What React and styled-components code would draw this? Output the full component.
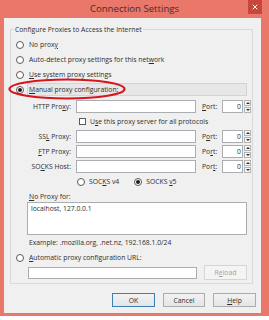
import styled, { createGlobalStyle } from "styled-components";
import { X } from "lucide-react";

const Global = createGlobalStyle`
  html, body {
    margin: 0;
    padding: 0;
    background: #ffffff;
  }
  body {
    font-family: "Open Sans", "Noto Sans", sans-serif;
    font-size: 6.8px;
    color: #2e2e2e;
  }
`;

const Frame = styled.div`
  position: relative;
  width: 269px;
  height: 316px;
  box-sizing: border-box;
  padding: 0 8px 3px 4px;
  background: #e9786b;
  display: flex;
  flex-direction: column;
`;

const TitleBar = styled.div`
  height: 18px;
  margin: 0 -8px 0 -4px;
  display: grid;
  grid-template-columns: 1fr auto 1fr;
  align-items: start;
`;

const Title = styled.div`
  grid-column: 2;
  font-size: 9.6px;
  line-height: 18px;
  color: #4a2b27;
`;

const Close = styled.div`
  grid-column: 3;
  justify-self: end;
  width: 14px;
  height: 14px;
  margin-right: 7px;
  background: #c9463d;
  color: #fff;
  display: flex;
  align-items: center;
  justify-content: center;
`;

const Content = styled.div`
  flex: 1;
  background: #f0f0f0;
  display: flex;
  flex-direction: column;
  padding: 0 5px 0 6px;
`;

const GroupBox = styled.fieldset`
  margin: 7px 3px 0 0;
  padding: 3px 5px 3px 5px;
  border: 1px solid #d9d9d9;
  min-width: 0;
`;

const Legend = styled.legend`
  margin-left: -2px;
  padding: 0 1px;
  line-height: 9px;
`;

const RadioRow = styled.div`
  display: flex;
  align-items: center;
  height: 15px;
  gap: ${(p) => p.$gap ?? 5}px;
  margin-top: ${(p) => p.$top ?? 0}px;
`;

const RadioDot = styled.span`
  flex: none;
  width: 8px;
  height: 8px;
  box-sizing: border-box;
  border-radius: 50%;
  border: 1px solid #5a5a5a;
  background: #fff;
  display: flex;
  align-items: center;
  justify-content: center;
  &::after {
    content: "";
    width: 4px;
    height: 4px;
    border-radius: 50%;
    background: ${(p) => (p.$on ? "#1e1e1e" : "transparent")};
  }
`;

const Band = styled.div`
  flex: 1;
  height: 11px;
  border: 1px solid #d3d3d3;
  background: #e7e7e7;
  display: flex;
  align-items: center;
  padding-left: 1px;
`;

const ProxyGrid = styled.div`
  margin-top: 3px;
  display: grid;
  grid-template-columns: 60px 120px 26px 29px;
  grid-auto-rows: 13px;
  row-gap: 2px;
  align-items: center;
`;

const FieldLabel = styled.div`
  text-align: right;
  padding-right: 5px;
`;

const PortLabel = styled.div`
  padding-left: 6px;
`;

const TextBox = styled.div`
  box-sizing: border-box;
  height: ${(p) => p.$h ?? 13}px;
  border: 1px solid #abadb3;
  background: #fff;
`;

const SpinBox = styled.div`
  display: flex;
  height: 13px;
  gap: 1px;
`;

const SpinValue = styled.div`
  flex: 1;
  box-sizing: border-box;
  border: 1px solid #abadb3;
  background: #fff;
  text-align: right;
  padding-right: 1px;
  line-height: 11px;
`;

const SpinArrows = styled.div`
  width: 7px;
  display: flex;
  flex-direction: column;
  gap: 1px;
`;

const Arrow = styled.div`
  flex: 1;
  border: 1px solid #b5b5b5;
  background: #f6f6f6;
  display: flex;
  align-items: center;
  justify-content: center;
  &::after {
    content: "";
    border-left: 2px solid transparent;
    border-right: 2px solid transparent;
    ${(p) => (p.$down ? "border-top" : "border-bottom")}: 2px solid #333;
  }
`;

const CheckRow = styled.div`
  grid-column: 2 / 5;
  display: flex;
  align-items: center;
  gap: 4px;
  padding-left: 3px;
`;

const CheckBox = styled.span`
  width: 7px;
  height: 7px;
  box-sizing: border-box;
  border: 1px solid #5a5a5a;
  background: #fff;
`;

const SocksRow = styled.div`
  grid-column: 2 / 5;
  display: flex;
  align-items: center;
  gap: 15px;
  padding-left: 1px;
`;

const Option = styled.div`
  display: flex;
  align-items: center;
  gap: 4px;
`;

const Caption = styled.div`
  line-height: 10px;
  margin: ${(p) => p.$top ?? 0}px 0 0 13px;
`;

const NoProxyArea = styled.textarea`
  display: block;
  box-sizing: border-box;
  height: 33px;
  margin-left: 11px;
  width: calc(100% - 11px);
  border: 1px solid #abadb3;
  background: #fff;
  resize: none;
  padding: 1px 3px;
  font: inherit;
  color: #2e2e2e;
  line-height: 9px;
  outline: none;
`;

const UrlRow = styled.div`
  display: flex;
  align-items: center;
  height: 15px;
  gap: 7px;
  padding-left: 12px;
`;

const UrlInput = styled(TextBox)`
  flex: 1;
  height: 12px;
`;

const Button = styled.div`
  box-sizing: border-box;
  width: ${(p) => p.$w ?? 43}px;
  height: ${(p) => p.$h ?? 14}px;
  display: flex;
  align-items: center;
  justify-content: center;
  border: 1px solid ${(p) => (p.$default ? "#3c7fb1" : "#acacac")};
  background: linear-gradient(#f2f2f2, #e5e5e5);
  color: ${(p) => (p.$disabled ? "#a3a3a3" : "#2e2e2e")};
  ${(p) => p.$disabled && "background: #f4f4f4; border-color: #d5d5d5;"}
`;

const ButtonBar = styled.div`
  display: flex;
  justify-content: flex-end;
  gap: 8px;
  margin-top: 9px;
`;

const Ellipse = styled.svg`
  position: absolute;
  left: 8px;
  top: 78px;
  pointer-events: none;
`;

function Spin() {
  return (
    <SpinBox>
      <SpinValue>0</SpinValue>
      <SpinArrows>
        <Arrow />
        <Arrow $down />
      </SpinArrows>
    </SpinBox>
  );
}

function ProxyRow({ label, port }) {
  return (
    <>
      <FieldLabel>{label}</FieldLabel>
      <TextBox />
      <PortLabel>{port}</PortLabel>
      <Spin />
    </>
  );
}

export default function App() {
  return (
    <>
      <Global />
      <Frame>
        <TitleBar>
          <Title>Connection Settings</Title>
          <Close>
            <X size={8} strokeWidth={3} />
          </Close>
        </TitleBar>
        <Content>
          <GroupBox>
            <Legend>Configure Proxies to Access the Internet</Legend>
            <RadioRow>
              <RadioDot />
              <span>No prox<u>y</u></span>
            </RadioRow>
            <RadioRow>
              <RadioDot />
              <span>Auto-detect proxy settings for this net<u>w</u>ork</span>
            </RadioRow>
            <RadioRow>
              <RadioDot />
              <span><u>U</u>se system proxy settings</span>
            </RadioRow>
            <RadioRow $gap={3}>
              <RadioDot $on />
              <Band>
                <span><u>M</u>anual proxy configuration:</span>
              </Band>
            </RadioRow>
            <ProxyGrid>
              <ProxyRow label={<>HTTP Pro<u>x</u>y:</>} port={<><u>P</u>ort:</>} />
              <CheckRow>
                <CheckBox />
                <span>U<u>s</u>e this proxy server for all protocols</span>
              </CheckRow>
              <ProxyRow label={<>SS<u>L</u> Proxy:</>} port={<>P<u>o</u>rt:</>} />
              <ProxyRow label={<><u>F</u>TP Proxy:</>} port={<>Po<u>r</u>t:</>} />
              <ProxyRow label={<>SO<u>C</u>KS Host:</>} port={<>Por<u>t</u>:</>} />
              <SocksRow>
                <Option>
                  <RadioDot />
                  <span>SOC<u>K</u>S v4</span>
                </Option>
                <Option>
                  <RadioDot $on />
                  <span>SOCKS <u>v</u>5</span>
                </Option>
              </SocksRow>
            </ProxyGrid>
            <Caption $top={4}>
              <u>N</u>o Proxy for:
            </Caption>
            <NoProxyArea readOnly defaultValue="localhost, 127.0.0.1" />
            <Caption $top={3}>Example: .mozilla.org, .net.nz, 192.168.1.0/24</Caption>
            <RadioRow $top={2}>
              <RadioDot />
              <span><u>A</u>utomatic proxy configuration URL:</span>
            </RadioRow>
            <UrlRow>
              <UrlInput />
              <Button $w={43} $h={15} $disabled>
                R<u>e</u>load
              </Button>
            </UrlRow>
          </GroupBox>
          <ButtonBar>
            <Button $default>OK</Button>
            <Button $w={42}>Cancel</Button>
            <Button>
              <u>H</u>elp
            </Button>
          </ButtonBar>
        </Content>
        <Ellipse width="120" height="22" viewBox="0 0 120 22">
          <ellipse cx="59" cy="11" rx="57.5" ry="9.5" fill="none" stroke="#d7151d" strokeWidth="2.2" />
        </Ellipse>
      </Frame>
    </>
  );
}
